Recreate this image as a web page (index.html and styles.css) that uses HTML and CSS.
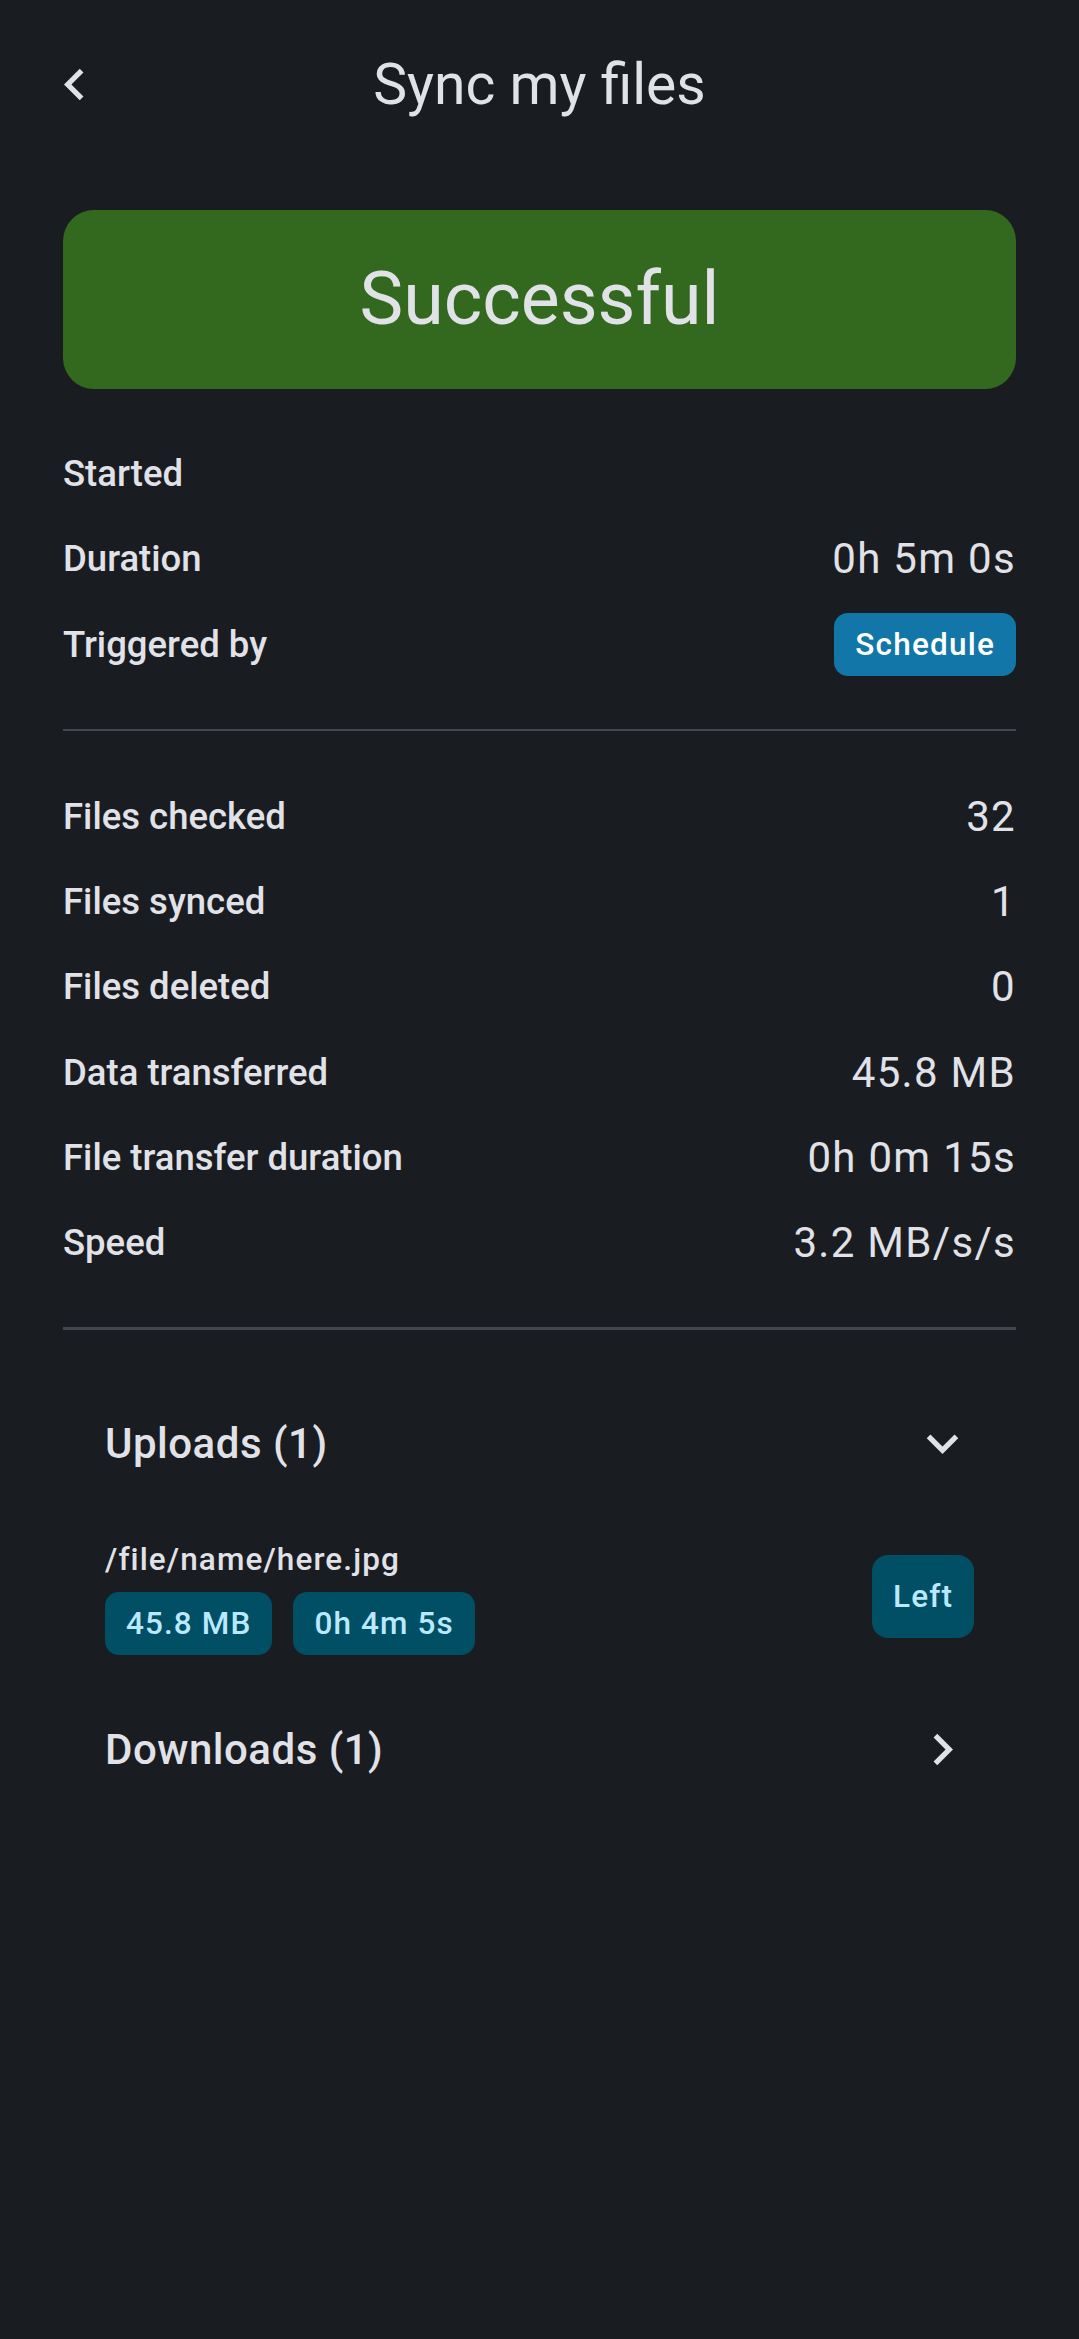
FILE: index.html
```html
<!DOCTYPE html>
<html lang="en">
  <head>
    <meta charset="UTF-8" />
    <meta name="viewport" content="width=device-width, initial-scale=1.0" />
    <title>Sync my files</title>
    <link rel="stylesheet" href="styles.css">
  </head>
  <body>
    <header class="topbar">
      <button class="icon-btn" aria-label="Back">
        <svg viewBox="0 0 24 24"><path d="M15.41 7.41L14 6l-6 6 6 6 1.41-1.41L10.83 12z" /></svg>
      </button>
      <h1 class="title">Sync my files</h1>
      <span></span>
    </header>

    <main class="content">
      <div class="status">Successful</div>

      <!-- Run info -->
      <section class="details">
        <div class="row"><span class="label">Started</span><span class="value"></span></div>
        <div class="row"><span class="label">Duration</span><span class="value">0h 5m 0s</span></div>
        <div class="row"><span class="label">Triggered by</span><span class="chip">Schedule</span></div>
      </section>

      <hr class="divider" />

      <!-- Stats -->
      <section class="details">
        <div class="row"><span class="label">Files checked</span><span class="value">32</span></div>
        <div class="row"><span class="label">Files synced</span><span class="value">1</span></div>
        <div class="row"><span class="label">Files deleted</span><span class="value">0</span></div>
        <div class="row"><span class="label">Data transferred</span><span class="value">45.8 MB</span></div>
        <div class="row"><span class="label">File transfer duration</span><span class="value">0h 0m 15s</span></div>
        <div class="row"><span class="label">Speed</span><span class="value">3.2 MB/s/s</span></div>
      </section>

      <hr class="divider" />

      <section class="transfers">
        <div class="group-head">
          <span>Uploads (1)</span>
          <svg class="icon" viewBox="0 0 24 24"><path d="M16.59 8.59L12 13.17 7.41 8.59 6 10l6 6 6-6z" /></svg>
        </div>

        <div class="file-item">
          <div class="file-info">
            <div class="file-name">/file/name/here.jpg</div>
            <div class="tags">
              <span class="tag">45.8 MB</span>
              <span class="tag">0h 4m 5s</span>
            </div>
          </div>
          <span class="side">Left</span>
        </div>

        <div class="group-head next">
          <span>Downloads (1)</span>
          <svg class="icon" viewBox="0 0 24 24"><path d="M10 6L8.59 7.41 13.17 12l-4.58 4.59L10 18l6-6z" /></svg>
        </div>
      </section>
    </main>
  </body>
</html>
```

FILE: styles.css
```css
body {
  margin: 0;
  min-height: 100vh;
  background-color: #191c20;
  color: #e1e2e8;
  font-family: Roboto, "Noto Sans", Arial, sans-serif;
}

.topbar {
  height: 168px;
  display: grid;
  grid-template-columns: 1fr auto 1fr;
  align-items: center;
}

.icon-btn {
  width: 63px;
  height: 63px;
  margin-left: 43px;
  padding: 0;
  border: none;
  background: none;
  cursor: pointer;
}

.icon-btn svg,
.icon {
  width: 63px;
  height: 63px;
  display: block;
  fill: #e1e2e8;
}

.title {
  margin: 0;
  font-size: 57px;
  font-weight: 400;
  line-height: 1;
}

.content {
  padding: 0 63px;
}

.status {
  margin-top: 42px;
  height: 179px;
  border-radius: 31px;
  background-color: #33691e;
  display: flex;
  justify-content: center;
  align-items: center;
  font-size: 73.5px;
  line-height: 1;
}

.details {
  padding: 42px 0;
}

.row {
  height: 85.3px;
  display: flex;
  justify-content: space-between;
  align-items: center;
}

.label {
  font-size: 36.5px;
  font-weight: 500;
}

.value {
  font-size: 42px;
  letter-spacing: 1.3px;
}

.chip {
  height: 63px;
  padding: 0 21px;
  border-radius: 14px;
  background-color: #1277a8;
  color: #ffffff;
  display: flex;
  align-items: center;
  font-size: 31.5px;
  font-weight: 500;
  letter-spacing: 1.2px;
}

.divider {
  margin: 0;
  border: none;
  height: 2.6px;
  background-color: #43474e;
}

.transfers {
  padding: 82px 42px;
}

.group-head {
  height: 63px;
  display: flex;
  justify-content: space-between;
  align-items: center;
  font-size: 42px;
  font-weight: 500;
  letter-spacing: 0.5px;
}

.group-head.next {
  margin-top: 63px;
}

.file-item {
  margin-top: 64px;
  display: flex;
  justify-content: space-between;
  align-items: center;
}

.file-name {
  font-size: 31.5px;
  font-weight: 500;
  line-height: 42px;
  letter-spacing: 1.1px;
}

.tags {
  margin-top: 11px;
  display: flex;
  gap: 21px;
}

.tag,
.side {
  background-color: #004f65;
  color: #bae9ff;
  font-size: 31.5px;
  font-weight: 500;
  letter-spacing: 1.1px;
  display: flex;
  align-items: center;
}

.tag {
  height: 63px;
  padding: 0 21px;
  border-radius: 14px;
}

.side {
  height: 83px;
  padding: 0 21px;
  border-radius: 16px;
}
```
